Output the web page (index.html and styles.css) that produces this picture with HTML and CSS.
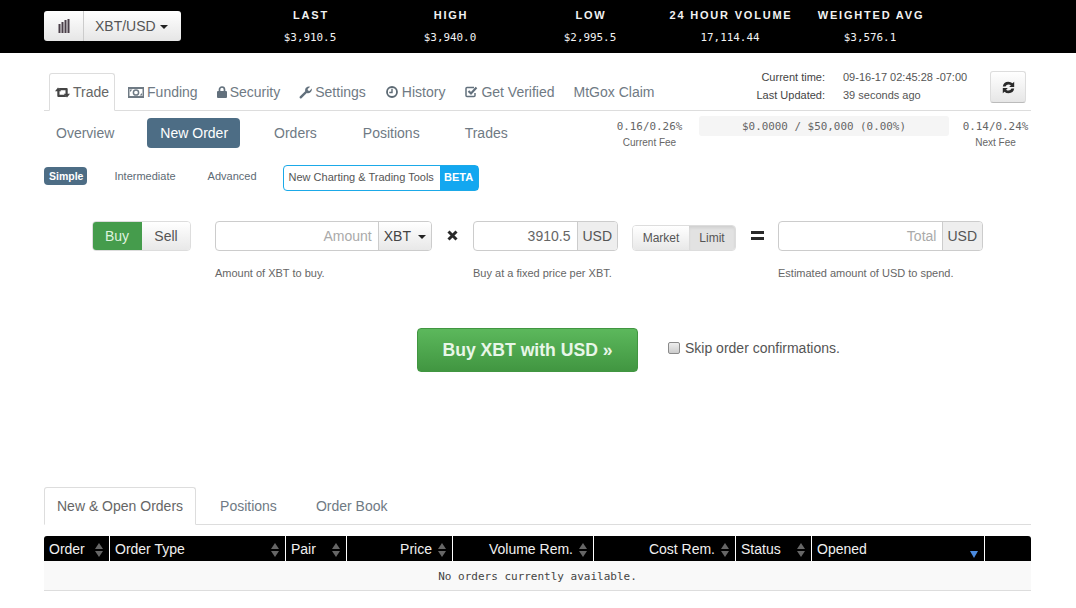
FILE: index.html
```html
<!DOCTYPE html>
<html lang="en">
<head>
<meta charset="utf-8">
<title>XBT/USD</title>
<link rel="stylesheet" href="styles.css">
</head>
<body>
<header class="topbar">
  <div class="pair-btn">
    <span class="pair-icon"><svg width="12" height="14" viewBox="0 0 12 14"><path d="M.5 5h2v9h-2zM3.500 3h2v11h-2zM6.500 1h2v13h-2zM9.500 0h2v14h-2z" fill="#4a3f48"/></svg></span>
    <span class="pair-name">XBT/USD<i class="caret"></i></span>
  </div>
  <div class="stats">
    <div class="stat"><b>LAST</b><span>$3,910.5</span></div>
    <div class="stat"><b>HIGH</b><span>$3,940.0</span></div>
    <div class="stat"><b>LOW</b><span>$2,995.5</span></div>
    <div class="stat"><b>24 HOUR VOLUME</b><span>17,114.44</span></div>
    <div class="stat"><b>WEIGHTED AVG</b><span>$3,576.1</span></div>
  </div>
</header>

<main class="page">
  <div class="mainnav">
    <a class="mtab active"><svg class="ic" width="15" height="11" viewBox="0 0 15 11"><path d="M3 .5 L6.300 4.200H4.500V7.800H9.500L11.300 10H3.300Q2.300 10 2.300 9V4.200H0Z M12 10.500 L8.700 6.800H10.500V3.200H5.500L3.700 1H11.700Q12.700 1 12.700 2V6.800H15Z" fill="#444"/></svg>Trade</a>
    <a class="mtab"><svg class="ic" width="16" height="11" viewBox="0 0 16 11"><path fill-rule="evenodd" d="M0 0h16v11H0zM1.500 2v7h13V2z" fill="#6f7a84"/><circle cx="8" cy="5.500" r="2.600" fill="none" stroke="#6f7a84" stroke-width="1.500"/><path d="M2 2.500h2.500L2 5zM14 8.500h-2.500L14 6z" fill="#6f7a84"/></svg>Funding</a>
    <a class="mtab"><svg class="ic" width="10" height="12" viewBox="0 0 10 12"><path d="M2.500 5V3.500a2.500 2.500 0 0 1 5 0V5" fill="none" stroke="#62707c" stroke-width="1.700"/><rect y="5" width="10" height="7" rx="1" fill="#62707c"/></svg>Security</a>
    <a class="mtab"><svg class="ic" width="13" height="13" viewBox="0 0 13 13"><path d="M0.800 10.500 L6.200 5.200 Q5.500 2 8.500 .7 Q10 .2 11.200 .8 L8.600 3 L9 4.500 L10.500 4.900 L12.700 2.400 Q13.300 4.500 11.500 6.300 Q9.800 7.600 7.800 6.900 L2.500 12.300 Q1.700 12.900 1 12.300 Q.2 11.400 .8 10.500Z" fill="#62707c"/></svg>Settings</a>
    <a class="mtab mtab-hist"><svg class="ic" width="13" height="12" viewBox="0 0 13 12"><circle cx="6" cy="6" r="5" fill="none" stroke="#5d6a74" stroke-width="1.800"/><path d="M6 2.800v3.700H3.300" fill="none" stroke="#5d6a74" stroke-width="1.400"/></svg>History</a>
    <a class="mtab mtab-ver"><svg class="ic" width="13" height="12" viewBox="0 0 13 12"><path d="M10 7v2.500q0 1-1 1H2q-1 0-1-1v-7q0-1 1-1h7" fill="none" stroke="#62707c" stroke-width="1.500"/><path d="M3.500 5 L6 7.500 L11.500 1.500" fill="none" stroke="#62707c" stroke-width="2.200"/></svg>Get Verified</a>
    <a class="mtab">MtGox Claim</a>
    <div class="times">
      <div class="time-labels"><span>Current time:</span><span>Last Updated:</span></div>
      <div class="time-values"><span>09-16-17 02:45:28 -07:00</span><span>39 seconds ago</span></div>
    </div>
    <button class="refresh" aria-label="Refresh"><svg width="13" height="13" viewBox="0 0 13 13"><path d="M.8 5.500 Q1.500 1 6.300 .8 Q8.900 .8 10.500 2.300 L12.200 .8 V6 H7.200 L8.900 4.300 Q7.900 3.400 6.400 3.400 Q4.300 3.500 3.500 5.500Z M12.200 7.500 Q11.500 12 6.700 12.200 Q4.100 12.200 2.500 10.700 L.8 12.200 V7 H5.800 L4.100 8.700 Q5.100 9.600 6.600 9.600 Q8.700 9.500 9.500 7.500Z" fill="#2a2a2a"/></svg></button>
  </div>

  <div class="subrow">
    <nav class="subnav">
      <a class="sub sub-overview">Overview</a>
      <a class="sub sub-new">New Order</a>
      <a class="sub sub-orders">Orders</a>
      <a class="sub sub-positions">Positions</a>
      <a class="sub">Trades</a>
    </nav>
    <div class="fees">
      <div class="fee"><span class="mono">0.16/0.26%</span><small>Current Fee</small></div>
      <div class="volume mono">$0.0000 / $50,000 (0.00%)</div>
      <div class="fee"><span class="mono">0.14/0.24%</span><small>Next Fee</small></div>
    </div>
  </div>

  <div class="moderow">
    <a class="mode mode-on">Simple</a>
    <a class="mode mode-mid">Intermediate</a>
    <a class="mode mode-adv">Advanced</a>
    <a class="beta-link"><span>New Charting &amp; Trading Tools</span><b>BETA</b></a>
  </div>

  <section class="orderform">
    <div class="toggle buysell"><span class="t-buy">Buy</span><span class="t-sell">Sell</span></div>
    <div class="field f-amount">
      <div class="inp"><span class="ph">Amount</span><span class="addon addon-btn">XBT<i class="caret"></i></span></div>
      <p>Amount of XBT to buy.</p>
    </div>
    <svg class="op op-x" width="11" height="11" viewBox="0 0 11 11"><path d="M1.500 1.500 9.500 9.500M9.500 1.500 1.500 9.500" stroke="#2a2a2a" stroke-width="3"/></svg>
    <div class="field f-price">
      <div class="inp"><span class="val">3910.5</span><span class="addon">USD</span></div>
      <p>Buy at a fixed price per XBT.</p>
    </div>
    <div class="toggle mktlim"><span class="t-mkt">Market</span><span class="t-lim">Limit</span></div>
    <svg class="op op-eq" width="13" height="9" viewBox="0 0 13 9"><path d="M0 0h13v3H0zM0 6h13v3H0z" fill="#2a2a2a"/></svg>
    <div class="field f-total">
      <div class="inp"><span class="ph">Total</span><span class="addon">USD</span></div>
      <p>Estimated amount of USD to spend.</p>
    </div>
  </section>

  <section class="submit">
    <button class="buybtn">Buy XBT with USD »</button>
    <label class="skip"><i class="check"></i>Skip order confirmations.</label>
  </section>

  <div class="tabs2">
    <a class="t2 t2-on">New &amp; Open Orders</a>
    <a class="t2">Positions</a>
    <a class="t2">Order Book</a>
  </div>

  <div class="thead">
    <div class="th">Order<i class="sort"></i></div>
    <div class="th">Order Type<i class="sort"></i></div>
    <div class="th">Pair<i class="sort"></i></div>
    <div class="th right">Price<i class="sort"></i></div>
    <div class="th right">Volume Rem.<i class="sort"></i></div>
    <div class="th right">Cost Rem.<i class="sort"></i></div>
    <div class="th">Status<i class="sort"></i></div>
    <div class="th">Opened<i class="sort sort-down"></i></div>
    <div class="th"></div>
  </div>
  <div class="empty">No orders currently available.</div>
</main>
</body>
</html>
```
FILE: styles.css
```css
* { box-sizing: border-box; }
html, body { margin: 0; padding: 0; }
body {
  background: #fff;
  color: #555;
  font-family: "Liberation Sans", Arial, sans-serif;
  font-size: 14px;
  height: 608px;
  overflow: hidden;
}
a { color: inherit; text-decoration: none; }
.mono { font-family: "DejaVu Sans Mono", "Liberation Mono", monospace; }
.caret {
  display: inline-block;
  width: 0; height: 0;
  border-left: 4px solid transparent;
  border-right: 4px solid transparent;
  border-top: 4px solid #222;
  margin-left: 4px;
  vertical-align: 2px;
}

/* top bar */
.topbar {
  background: #000;
  height: 53px;
  padding: 11px 0 0 44px;
  display: flex;
  align-items: flex-start;
}
.pair-btn {
  width: 137px;
  height: 30px;
  display: flex;
  background: linear-gradient(#fff, #e6e6e6);
  border-radius: 3px;
  color: #555;
}
.pair-icon {
  width: 40px;
  display: flex;
  align-items: center;
  justify-content: center;
  border-right: 1px solid #ccc;
}
.pair-name { flex: 1; line-height: 30px; padding-left: 11px; }
.stats { display: flex; margin-left: 59px; }
.stat {
  width: 140px;
  text-align: center;
  color: #f2f2f2;
  display: flex;
  flex-direction: column;
  align-items: center;
}
.stat b { font-size: 11px; letter-spacing: 1.800px; line-height: 13px; margin-top: -2px; padding-left: 2px; white-space: nowrap; }
.stat span { font-family: "DejaVu Sans Mono", monospace; font-size: 10.900px; line-height: 13px; margin-top: 9px; }

/* main */
.page { margin: 0 45px 0 44px; }
.mainnav {
  height: 58px;
  padding: 20px 0 0 5px;
  display: flex;
  border-bottom: 1px solid #ddd;
  position: relative;
}
.mtab {
  height: 38px;
  padding: 0 5px;
  margin-right: 7px;
  line-height: 37px;
  color: #6f7a84;
  white-space: nowrap;
  border: 1px solid transparent;
  display: flex;
  align-items: center;
}
.mtab-hist, .mtab-ver { margin-left: 1px; }
.mtab.active {
  background: #fff;
  border-color: #ddd;
  border-bottom-color: #fff;
  border-radius: 3px 3px 0 0;
  color: #666;
}
.ic { margin-right: 3px; flex: none; }
.times {
  display: flex;
  position: absolute;
  right: 63px;
  top: 15px;
  font-size: 11px;
  line-height: 18px;
  color: #444;
  gap: 18px;
}
.time-labels, .time-values { display: flex; flex-direction: column; white-space: nowrap; }
.time-labels { text-align: right; }
.time-values { width: 125px; color: #555; }
.refresh {
  position: absolute;
  right: 5px;
  top: 18px;
  width: 36px;
  height: 32px;
  border: 1px solid #ddd;
  border-bottom-color: #bbb;
  border-radius: 3px;
  background: linear-gradient(#fff, #e6e6e6);
  padding: 0;
  display: flex;
  align-items: center;
  justify-content: center;
}

.subrow { display: flex; justify-content: space-between; height: 54px; padding-top: 7px; }
.subnav { display: flex; align-items: flex-start; padding-left: 12px; color: #6f7a84; }
.sub { line-height: 30px; height: 30px; white-space: nowrap; }
.sub-overview { margin-right: 33px; }
.sub-new {
  background: #4d6d85;
  color: #fff;
  padding: 0 12px 0 13px;
  border-radius: 4px;
  margin-right: 34px;
}
.sub-orders { margin-right: 46px; }
.sub-positions { margin-right: 45px; }
.fees { display: flex; font-size: 10.900px; margin-top: -2px; padding-right: 2px; }
.fee { display: flex; flex-direction: column; align-items: center; width: 67px; color: #666; line-height: 21px; }
.fee small { font-size: 10px; line-height: 12px; margin-top: 0; color: #666; }
.volume {
  width: 250px;
  height: 20px;
  line-height: 21px;
  text-align: center;
  background: #f5f5f5;
  border-radius: 3px;
  color: #666;
  margin: 0 13px 0 16px;
}

.moderow { display: flex; align-items: center; height: 26px; font-size: 11px; color: #5d6a74; }
.mode { white-space: nowrap; margin-bottom: 4px; }
.mode-on {
  background: #4d6d85;
  color: #fff;
  font-weight: 700;
  font-size: 10.500px;
  padding: 0 4px 0 5px;
  height: 18px;
  line-height: 18px;
  border-radius: 4px;
  margin-right: 27px;
}
.mode-mid { margin-right: 32px; }
.mode-adv { margin-right: 26px; }
.beta-link {
  display: flex;
  width: 196px;
  height: 26px;
  border: 1px solid #1ba9e8;
  border-radius: 4px;
  line-height: 23px;
  color: #555;
}
.beta-link span { flex: 1; padding-left: 5px; white-space: nowrap; }
.beta-link b { background: #13a7f0; color: #fff; width: 38px; text-align: center; font-size: 11px; }

/* form */
.orderform { display: flex; align-items: flex-start; margin-top: 30px; padding-left: 48px; height: 107px; }
.toggle {
  display: flex;
  border-radius: 4px;
  overflow: hidden;
  border: 1px solid #ddd;
  color: #555;
  white-space: nowrap;
}
.buysell { width: 99px; height: 30px; line-height: 28px; }
.t-buy { width: 50px; margin: -1px 0 -1px -1px; line-height: 30px; background: #459c4c; color: #dff3df; text-align: center; }
.t-sell { flex: 1; text-align: center; background: linear-gradient(#fff, #e8e8e8); }
.field p { margin: 15px 0 0; font-size: 11px; line-height: 14px; color: #666; white-space: nowrap; }
.inp {
  height: 30px;
  display: flex;
  border: 1px solid #ccc;
  border-radius: 4px;
  overflow: hidden;
  line-height: 28px;
}
.ph, .val { flex: 1; text-align: right; padding-right: 6px; }
.ph { color: #aaa; }
.val { color: #666; padding-right: 7px; }
.addon {
  background: #eee;
  border-left: 1px solid #ccc;
  padding: 0 5px 0 4px;
  color: #555;
}
.addon-btn { background: linear-gradient(#fff, #e8e8e8); color: #444; padding: 0 5px; }
.addon-btn .caret { margin-left: 7px; }
.f-amount { width: 217px; margin-left: 24px; }
.op-x { margin: 9px 15px 0 15px; }
.f-price { width: 145px; }
.mktlim { width: 104px; height: 26px; margin: 4px 0 0 14px; font-size: 12px; line-height: 24px; }
.t-mkt { flex: 1; text-align: center; background: linear-gradient(#fff, #e8e8e8); }
.t-lim { width: 46px; text-align: center; background: #e2e2e2; box-shadow: inset 0 2px 3px rgba(0,0,0,.08); }
.op-eq { margin: 10px 14px 0 15px; }
.f-total { width: 205px; margin-left: 0; }

.submit { display: flex; align-items: center; padding-left: 373px; height: 44px; }
.buybtn {
  width: 221px;
  height: 44px;
  border: 1px solid #419641;
  border-radius: 4px;
  background: linear-gradient(#5cb85c, #419641);
  color: #e8f6e8;
  font: 700 17.600px "Liberation Sans", Arial, sans-serif;
  padding: 0;
}
.skip { display: flex; align-items: center; margin-left: 30px; color: #555; margin-top: -4px; }
.check {
  width: 12px;
  height: 12px;
  border: 1px solid #8a8a8a;
  border-radius: 2px;
  background: linear-gradient(#eee, #ccc);
  margin-right: 5px;
}

/* lower */
.tabs2 {
  margin-top: 115px;
  height: 38px;
  display: flex;
  border-bottom: 1px solid #ddd;
  color: #6f7a84;
}
.t2 { height: 38px; line-height: 37px; padding: 0 12px; margin-right: 13px; border: 1px solid transparent; white-space: nowrap; }
.t2-on { background: #fff; border-color: #ddd; border-bottom-color: #fff; border-radius: 3px 3px 0 0; margin-right: 11px; color: #666; }
.thead {
  margin-top: 11px;
  display: grid;
  grid-template-columns: 65px 175px 60px 105px 140px 141px 75px 172px 1fr;
  column-gap: 1px;
  height: 25px;
  border-radius: 3px 3px 0 0;
  overflow: hidden;
}
.th {
  background: #000;
  color: #f0f0f0;
  line-height: 25px;
  padding: 1px 5px 0;
  display: flex;
  align-items: center;
  justify-content: space-between;
}
.th.right { justify-content: flex-end; gap: 6px; }
.sort { width: 9px; height: 14px; position: relative; flex: none; }
.sort::before, .sort::after {
  content: "";
  position: absolute;
  left: 0;
  border-left: 4.500px solid transparent;
  border-right: 4.500px solid transparent;
}
.sort::before { top: 0; border-bottom: 6px solid #666; }
.sort::after { bottom: 0; border-top: 6px solid #666; }
.sort-down::before { display: none; }
.sort-down::after { border-top: 7px solid #4b8be0; bottom: -1px; }
.empty {
  height: 30px;
  background: #f9f9f9;
  border-bottom: 1px solid #ddd;
  text-align: center;
  font-family: "DejaVu Sans Mono", monospace;
  font-size: 11px;
  line-height: 31px;
  color: #444;
}
```
